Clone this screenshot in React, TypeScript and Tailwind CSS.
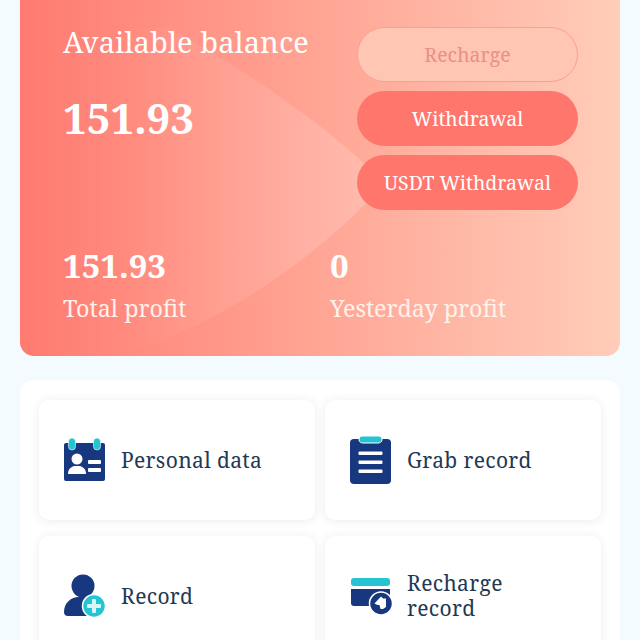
import React from "react";

const serif = "font-['Noto_Serif','Liberation_Serif',serif]";

const IdIcon = () => (
  <svg width="42" height="44" viewBox="0 0 42 44">
    <rect x="0" y="5" width="41" height="38" rx="2" fill="#17377f" />
    <rect x="4.500" y="0" width="7" height="12" rx="3.500" fill="#25c4d2" stroke="#fff" strokeWidth="0.6" />
    <rect x="29.500" y="0" width="7" height="12" rx="3.500" fill="#25c4d2" stroke="#fff" strokeWidth="0.6" />
    <circle cx="13" cy="21" r="5.500" fill="#fff" />
    <path d="M4 36c0-5 3-7 6-8h6c3 1 6 3 6 8z" fill="#fff" />
    <rect x="24" y="22" width="13" height="4" rx="1" fill="#fff" />
    <rect x="24" y="30" width="13" height="4" rx="1" fill="#fff" />
  </svg>
);

const ClipboardIcon = () => (
  <svg width="42" height="48" viewBox="0 0 42 48">
    <rect x="0" y="3" width="41" height="45" rx="4" fill="#17377f" />
    <path d="M9 4c0-3 1-4 4-4h15c3 0 4 1 4 4 0 2-2 3-4 3H13c-2 0-4-1-4-3z" fill="#25c4d2" stroke="#fff" strokeWidth="1" />
    <rect x="8.500" y="15.500" width="24" height="3.500" rx="1" fill="#fff" />
    <rect x="8.500" y="24.500" width="24" height="3.500" rx="1" fill="#fff" />
    <rect x="8.500" y="33.500" width="24" height="3.500" rx="1" fill="#fff" />
  </svg>
);

const UserPlusIcon = () => (
  <svg width="42" height="44" viewBox="0 0 42 44">
    <circle cx="19" cy="12" r="11.500" fill="#17377f" />
    <path d="M0 38c0-9 7-15 15-15h8c5 0 9 2 11 5v14H4c-3 0-4-2-4-4z" fill="#17377f" />
    <circle cx="30" cy="32" r="11.500" fill="#25c4d2" stroke="#fff" strokeWidth="1.500" />
    <rect x="28" y="25" width="4" height="14" rx="1" fill="#d8f6f9" />
    <rect x="23" y="30" width="14" height="4" rx="1" fill="#d8f6f9" />
  </svg>
);

const CardIcon = () => (
  <svg width="42" height="39" viewBox="0 0 42 39">
    <rect x="1" y="1" width="39" height="8" rx="3" fill="#25c4d2" />
    <path d="M1 12h39v14a3 3 0 0 1-3 3H4a3 3 0 0 1-3-3z" fill="#17377f" />
    <circle cx="31" cy="26.500" r="11.500" fill="#17377f" stroke="#fff" strokeWidth="1.500" />
    <path d="M24.500 26.500l6.500-7 2 2h3v8.500l-3 2h-2.500l-1-4h-2z" fill="#fff" />
  </svg>
);

function MenuCard({ icon, label }: { icon: React.ReactNode; label: string }) {
  return (
    <div className="h-[120px] flex items-center gap-[15px] pl-[25px] bg-white rounded-[10px] shadow-[0_1px_10px_rgba(40,70,120,0.10)]">
      <div className="w-[42px] flex justify-center shrink-0">{icon}</div>
      <span className="max-w-[150px] text-[21px] leading-[25px] text-[#1f3a52] tracking-[0.35px]">{label}</span>
    </div>
  );
}

export default function App() {
  return (
    <div className={`w-[640px] h-[640px] overflow-hidden bg-[#f3fbff] ${serif}`}>
      {/* balance card */}
      <div className="relative mx-[20px] -mt-[20px] h-[376px] rounded-[14px] overflow-hidden bg-gradient-to-r from-[#ff7a71] to-[#ffcdb9] text-white">
        <svg className="absolute inset-0" width="600" height="376" viewBox="0 0 600 376">
          <defs>
            <linearGradient id="lens" gradientUnits="userSpaceOnUse" x1="100" x2="365" y1="0" y2="0">
              <stop offset="0" stopColor="#ffffff" stopOpacity="0" />
              <stop offset="1" stopColor="#ffffff" stopOpacity="0.2" />
            </linearGradient>
            <linearGradient id="wedge" gradientUnits="userSpaceOnUse" x1="200" x2="0" y1="376" y2="0">
              <stop offset="0" stopColor="#ffffff" stopOpacity="0" />
              <stop offset="1" stopColor="#ffffff" stopOpacity="0.04" />
            </linearGradient>
          </defs>
          <path d="M150 48C220 88 295 135 365 203C300 275 210 340 100 376H0V48Z" fill="url(#lens)" />
          <path d="M365 203C400 235 435 290 450 340H240C280 300 330 250 365 203Z" fill="url(#wedge)" />
        </svg>

        <div className="relative flex justify-between pt-[47px] pl-[43px] pr-[42px]">
          <div className="-mt-[5px]">
            <div className="text-[29px] leading-[40px] tracking-[0.1px]">Available balance</div>
            <div className="mt-[31px] text-[42px] leading-[50px] font-bold">151.93</div>
          </div>
          <div className="w-[221px] flex flex-col gap-[9px] text-[19.500px]">
            <div className="h-[55px] flex items-center justify-center rounded-full bg-[#ffc6b4] border border-[#fb9f90] text-[#ec8f85]">Recharge</div>
            <div className="h-[55px] flex items-center justify-center rounded-full bg-[#ff766d]">Withdrawal</div>
            <div className="h-[55px] flex items-center justify-center rounded-full bg-[#ff766d]">USDT Withdrawal</div>
          </div>
        </div>

        <div className="relative flex mt-[36px] pl-[43px]">
          <div className="w-[267px]">
            <div className="text-[33px] leading-[40px] font-bold">151.93</div>
            <div className="mt-[6px] text-[23.300px] leading-[32px] text-[#fff2ec]">Total profit</div>
          </div>
          <div>
            <div className="text-[33px] leading-[40px] font-bold">0</div>
            <div className="mt-[6px] text-[23.300px] leading-[32px] text-[#fff2ec]">Yesterday profit</div>
          </div>
        </div>
      </div>

      {/* menu */}
      <div className="mx-[20px] mt-[24px] rounded-[14px] bg-white pt-[20px] px-[19px] grid grid-cols-2 gap-x-[10px] gap-y-[16px]">
        <MenuCard icon={<IdIcon />} label="Personal data" />
        <MenuCard icon={<ClipboardIcon />} label="Grab record" />
        <MenuCard icon={<UserPlusIcon />} label="Record" />
        <MenuCard icon={<CardIcon />} label="Recharge record" />
      </div>
    </div>
  );
}
